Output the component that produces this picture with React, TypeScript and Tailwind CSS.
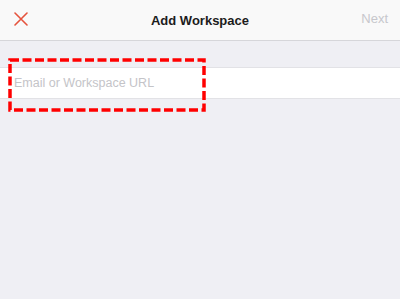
export default function App() {
  return (
    <div className="h-[299px] w-[400px] bg-[#efeff4] font-['Helvetica_Neue','Liberation_Sans',Arial,sans-serif]">
      <header className="relative flex h-[41px] items-center justify-between border-b border-[#d6d6da] bg-[#f9f9f9] pl-[14px] pr-[12px]">
        <svg width="14" height="14" viewBox="0 0 14 14" className="mb-[2px]">
          <path d="M1 1 L13 13 M13 1 L1 13" stroke="#e5533d" strokeWidth="1.6" strokeLinecap="round" />
        </svg>
        <div className="absolute left-0 right-0 top-[11px] text-center text-[13px] font-bold text-[#1c1c1c]">
          Add Workspace
        </div>
        <span className="mb-[2px] text-[13px] text-[#c7c7cc]">Next</span>
      </header>
      <div className="relative mt-[26px] flex h-[32px] items-center border-y border-[#e2e2e6] bg-white px-[14px]">
        <span className="text-[12.5px] text-[#c4c4c8]">Email or Workspace URL</span>
        {/* highlight marker */}
        <svg className="absolute left-[8px] top-[-10px]" width="198" height="54" viewBox="0 0 198 54">
          <rect x="2" y="2" width="194" height="50" fill="none" stroke="#ff0000" strokeWidth="3.5" strokeDasharray="9 3.5" />
        </svg>
      </div>
    </div>
  );
}
